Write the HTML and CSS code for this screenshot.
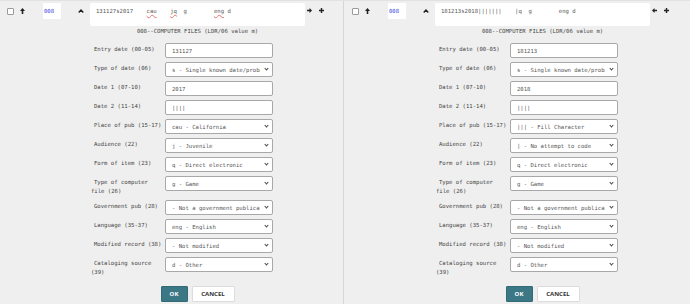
FILE: index.html
```html
<!DOCTYPE html>
<html lang="en">
<head>
    <meta charset="UTF-8">
    <title>008 Compare</title>
    <link rel="stylesheet" href="styles.css">
</head>
<body>
    <div class="compare">
        <section class="panel">
            <div class="field-bar">
                <input type="checkbox" class="pick">
                <svg class="icon up" width="5" height="6" viewBox="0 0 5 6"><polygon points="2.5,0 5,3 3.3,3 3.3,6 1.7,6 1.7,3 0,3"/></svg>
                <span class="tag">008</span>
                <svg class="icon caret" width="6" height="4" viewBox="0 0 6 4"><polyline points="0.7,3.4 3,1 5.3,3.4"/></svg>
                <div class="field-text">131127s2017    <span class="typo">cau</span>    <span class="typo">jq</span>  g        <span class="typo">eng</span> d</div>
                <div class="field-actions">
                    <svg class="icon" width="5" height="5" viewBox="0 0 5 5"><polygon points="5,2.5 2.5,0 2.5,1.7 0,1.7 0,3.3 2.5,3.3 2.5,5"/></svg>
                    <svg class="icon plus" width="5" height="5" viewBox="0 0 5 5"><polygon points="1.8,0 3.2,0 3.2,1.8 5,1.8 5,3.2 3.2,3.2 3.2,5 1.8,5 1.8,3.2 0,3.2 0,1.8 1.8,1.8"/></svg>
                </div>
            </div>
            <div class="fixed">
                <div class="fixed-title">008--COMPUTER FILES (LDR/06 value m)</div>
                <div class="row"><label>Entry date (00-05)</label><input type="text" value="131127"></div>
                <div class="row"><label>Type of date (06)</label><span class="select"><select><option>s - Single known date/probable date</option></select></span></div>
                <div class="row"><label>Date 1 (07-10)</label><input type="text" value="2017"></div>
                <div class="row"><label>Date 2 (11-14)</label><input type="text" value="||||"></div>
                <div class="row"><label>Place of pub (15-17)</label><span class="select"><select><option>cau - California</option></select></span></div>
                <div class="row"><label>Audience (22)</label><span class="select"><select><option>j - Juvenile</option></select></span></div>
                <div class="row"><label>Form of item (23)</label><span class="select"><select><option>q - Direct electronic</option></select></span></div>
                <div class="row"><label>Type of computer file (26)</label><span class="select"><select><option>g - Game</option></select></span></div>
                <div class="row"><label>Government pub (28)</label><span class="select"><select><option>- Not a government publication</option></select></span></div>
                <div class="row"><label>Language (35-37)</label><span class="select"><select><option>eng - English</option></select></span></div>
                <div class="row"><label>Modified record (38)</label><span class="select"><select><option>- Not modified</option></select></span></div>
                <div class="row"><label>Cataloging source (39)</label><span class="select"><select><option>d - Other</option></select></span></div>
                <div class="buttons">
                    <button class="ok">OK</button>
                    <button class="cancel">CANCEL</button>
                </div>
            </div>
        </section>

        <section class="panel">
            <div class="field-bar">
                <input type="checkbox" class="pick">
                <svg class="icon up" width="5" height="6" viewBox="0 0 5 6"><polygon points="2.5,0 5,3 3.3,3 3.3,6 1.7,6 1.7,3 0,3"/></svg>
                <span class="tag">008</span>
                <svg class="icon caret" width="6" height="4" viewBox="0 0 6 4"><polyline points="0.7,3.4 3,1 5.3,3.4"/></svg>
                <div class="field-text">181213s2018|||||||    |q  g        eng d</div>
                <div class="field-actions">
                    <svg class="icon" width="5" height="5" viewBox="0 0 5 5"><polygon points="0,2.5 2.5,0 2.5,1.7 5,1.7 5,3.3 2.5,3.3 2.5,5"/></svg>
                    <svg class="icon plus" width="5" height="5" viewBox="0 0 5 5"><polygon points="1.8,0 3.2,0 3.2,1.8 5,1.8 5,3.2 3.2,3.2 3.2,5 1.8,5 1.8,3.2 0,3.2 0,1.8 1.8,1.8"/></svg>
                </div>
            </div>
            <div class="fixed">
                <div class="fixed-title">008--COMPUTER FILES (LDR/06 value m)</div>
                <div class="row"><label>Entry date (00-05)</label><input type="text" value="181213"></div>
                <div class="row"><label>Type of date (06)</label><span class="select"><select><option>s - Single known date/probable date</option></select></span></div>
                <div class="row"><label>Date 1 (07-10)</label><input type="text" value="2018"></div>
                <div class="row"><label>Date 2 (11-14)</label><input type="text" value="||||"></div>
                <div class="row"><label>Place of pub (15-17)</label><span class="select"><select><option>||| - Fill Character</option></select></span></div>
                <div class="row"><label>Audience (22)</label><span class="select"><select><option>| - No attempt to code</option></select></span></div>
                <div class="row"><label>Form of item (23)</label><span class="select"><select><option>q - Direct electronic</option></select></span></div>
                <div class="row"><label>Type of computer file (26)</label><span class="select"><select><option>g - Game</option></select></span></div>
                <div class="row"><label>Government pub (28)</label><span class="select"><select><option>- Not a government publication</option></select></span></div>
                <div class="row"><label>Language (35-37)</label><span class="select"><select><option>eng - English</option></select></span></div>
                <div class="row"><label>Modified record (38)</label><span class="select"><select><option>- Not modified</option></select></span></div>
                <div class="row"><label>Cataloging source (39)</label><span class="select"><select><option>d - Other</option></select></span></div>
                <div class="buttons">
                    <button class="ok">OK</button>
                    <button class="cancel">CANCEL</button>
                </div>
            </div>
        </section>
    </div>
</body>
</html>
```

FILE: styles.css
```css
body {
    margin: 0;
    padding: 0;
    background: #efefef;
    color: #444;
    font-family: "DejaVu Sans Mono", "Liberation Mono", monospace;
    font-size: 5.6px;
}

.compare {
    display: flex;
    height: 304px;
    border-top: 1px solid #e2e2e2;
    box-sizing: border-box;
}

.panel {
    width: 344px;
    padding-top: 2px;
    box-sizing: border-box;
    border-right: 1px solid #d6d6d6;
}

.panel + .panel {
    flex: 1;
    border-right: none;
    padding-left: 1px;
}

/* top bar: checkbox, move, tag, collapse, raw value, actions */
.field-bar {
    display: flex;
    align-items: flex-start;
    padding-left: 7px;
}

.pick {
    appearance: none;
    width: 7px;
    height: 7px;
    margin: 5px 0 0 0;
    border: 1px solid #9a9a9a;
    border-radius: 1px;
    background: #fff;
    box-sizing: border-box;
}

.icon {
    display: block;
    fill: #222;
}

.up {
    margin: 5px 0 0 6px;
}

.tag {
    margin-left: 18px;
    width: 18px;
    height: 16px;
    background: #fff;
    color: #3a45e0;
    line-height: 16px;
    padding-left: 1px;
    box-sizing: border-box;
}

.caret {
    margin: 6px 0 0 17px;
    fill: none;
    stroke: #222;
    stroke-width: 1.4;
}

.field-text {
    margin-left: 6px;
    width: 215px;
    height: 23px;
    background: #fff;
    border-radius: 2px;
    white-space: pre;
    padding: 4px 6px;
    box-sizing: border-box;
    line-height: 9px;
    color: #555;
}

.typo {
    text-decoration: underline wavy #e87070;
    text-decoration-thickness: 0.5px;
    text-underline-offset: 1px;
}

.field-actions {
    display: flex;
    margin: 5px 0 0 2px;
}

.field-actions .plus {
    margin-left: 7px;
}

/* fixed field editor */
.fixed {
    margin-left: 90px;
    width: 215px;
}

.fixed-title {
    text-align: center;
    line-height: 9px;
    margin: 1px 0 7px;
}

.row {
    display: flex;
    align-items: flex-start;
    margin-bottom: 4px;
    padding-left: 1px;
}

.row label {
    width: 72px;
    margin-right: 2px;
    padding-top: 2px;
    line-height: 9px;
    text-indent: 3px;
}

.row input,
.select select {
    width: 108px;
    height: 15px;
    margin: 0;
    padding: 0 6px;
    border: 1px solid #a8a8a8;
    border-radius: 2px;
    background: #fff;
    color: #555;
    font-family: inherit;
    font-size: 5.6px;
    box-sizing: border-box;
    outline: none;
}

.select {
    position: relative;
    display: block;
}

.select select {
    appearance: none;
    padding-right: 12px;
}

.select::after {
    content: "";
    position: absolute;
    right: 5px;
    top: 5px;
    width: 2px;
    height: 2px;
    border-right: 1px solid #444;
    border-bottom: 1px solid #444;
    transform: rotate(45deg);
}

.buttons {
    display: flex;
    justify-content: center;
    gap: 4px;
    margin-top: 9px;
}

.buttons button {
    height: 16px;
    padding: 0;
    font-family: "Open Sans", sans-serif;
    font-weight: bold;
    font-size: 6px;
    border-radius: 1px;
    cursor: pointer;
}

.ok {
    width: 27px;
    background: #3b7784;
    border: 1px solid #326a76;
    color: #fff;
}

.cancel {
    width: 43px;
    background: #fff;
    border: 1px solid #dcdcdc;
    color: #333;
}
```
